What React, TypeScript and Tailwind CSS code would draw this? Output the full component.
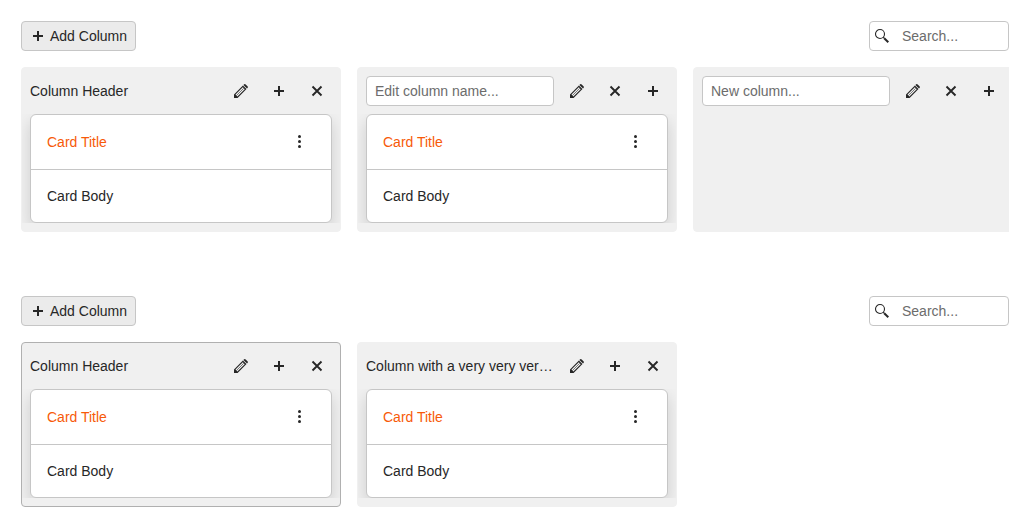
import React from "react";

type IconProps = { className?: string };

const PlusIcon = () => (
  <svg className="size-4 shrink-0" viewBox="0 0 16 16" fill="currentColor">
    <path d="M7 3h2v4h4v2H9v4H7V9H3V7h4z" />
  </svg>
);

const CloseIcon = () => (
  <svg className="size-4 shrink-0" viewBox="0 0 16 16" fill="none" stroke="currentColor" strokeWidth="1.9">
    <path d="M3.5 3.5l9 9M12.5 3.5l-9 9" />
  </svg>
);

const PencilIcon = () => (
  <svg className="size-4 shrink-0" viewBox="0 0 16 16" fill="currentColor">
    <path
      fillRule="evenodd"
      d="M1 15v-3.6l8.9-8.9 3.6 3.6L4.6 15zM2.5 11.6l1.9 1.9 7.3-7.3-1.9-1.9z"
    />
    <path d="M3.4 12.6l7.3-7.3" stroke="currentColor" strokeWidth="0.6" />
    <path d="M1 15v-2.4L3.4 15z" />
    <path d="M10.4 2l.8-.7q.6-.5 1.2 0l2.3 2.3q.5.6 0 1.2l-.7.8z" />
  </svg>
);

const SearchIcon = ({ className = "" }: IconProps) => (
  <svg className={`size-4 shrink-0 ${className}`} viewBox="0 0 16 16" fill="none" stroke="currentColor">
    <circle cx="6" cy="6" r="4.5" strokeWidth="1.1" />
    <path d="M9.2 9.2l1.2 1.2" strokeWidth="1.2" />
    <path d="M10.2 10.2l4.1 4.1" strokeWidth="2" />
  </svg>
);

const MoreIcon = () => (
  <svg className="size-4 shrink-0" viewBox="0 0 16 16" fill="currentColor">
    <circle cx="7.5" cy="2.5" r="1.5" />
    <circle cx="7.5" cy="7.5" r="1.5" />
    <circle cx="7.5" cy="12.5" r="1.5" />
  </svg>
);

const icons = { edit: PencilIcon, add: PlusIcon, close: CloseIcon, more: MoreIcon };
type Action = keyof typeof icons;

function IconButton({ action }: { action: Action }) {
  const Icon = icons[action];
  return (
    <button aria-label={action} className="flex size-[30px] shrink-0 items-center justify-center">
      <Icon />
    </button>
  );
}

function Card() {
  return (
    <div className="rounded-md border border-[#c6c6c6] bg-white shadow-[0_7px_16px_rgba(0,0,0,0.14)]">
      <div className="flex h-[55px] items-center justify-between border-b border-[#c6c6c6] px-4">
        <span className="text-[#f75a08]">Card Title</span>
        <IconButton action="more" />
      </div>
      <div className="flex h-[52px] items-center px-4">Card Body</div>
    </div>
  );
}

type ColumnProps = {
  title?: string;
  placeholder?: string;
  actions: Action[];
  selected?: boolean;
  empty?: boolean;
};

function Column({ title, placeholder, actions, selected, empty }: ColumnProps) {
  return (
    <section
      className={`flex h-[165px] w-80 shrink-0 flex-col rounded border bg-[#f0f0f0] ${
        selected ? "border-[#b0b0b0]" : "border-[#f0f0f0]"
      }`}
    >
      <header className="flex gap-2 p-2">
        {placeholder ? (
          <input
            className="h-[30px] w-0 min-w-0 flex-1 rounded border border-[#c6c6c6] bg-white px-2 outline-none placeholder:text-[#6c6c6c]"
            placeholder={placeholder}
          />
        ) : (
          <div className="min-w-0 flex-1 truncate leading-[30px]">{title}</div>
        )}
        {actions.map((action) => (
          <IconButton key={action} action={action} />
        ))}
      </header>
      <div className="mb-2 flex-1 overflow-hidden px-2">{!empty && <Card />}</div>
    </section>
  );
}

function TaskBoard({ columns }: { columns: ColumnProps[] }) {
  return (
    <div className="flex w-[988px] flex-col gap-4">
      <div className="flex items-center justify-between">
        <button className="flex h-[30px] items-center gap-1 rounded border border-[#c6c6c6] bg-[#ebebeb] px-2">
          <PlusIcon />
          <span>Add Column</span>
        </button>
        <label className="flex h-[30px] w-[140px] items-center rounded border border-[#c6c6c6] bg-white">
          <SearchIcon className="ml-1" />
          <input
            className="ml-1 w-0 min-w-0 flex-1 px-2 outline-none placeholder:text-[#6c6c6c]"
            placeholder="Search..."
          />
        </label>
      </div>
      <div className="flex gap-4 overflow-hidden">
        {columns.map((column, index) => (
          <Column key={index} {...column} />
        ))}
      </div>
    </div>
  );
}

export default function App() {
  return (
    <main className="flex h-[528px] flex-col gap-16 overflow-hidden bg-white pt-[21px] pl-[21px] font-['Liberation_Sans',Arial,sans-serif] text-sm text-[#272727] antialiased">
      <TaskBoard
        columns={[
          { title: "Column Header", actions: ["edit", "add", "close"] },
          { placeholder: "Edit column name...", actions: ["edit", "close", "add"] },
          { placeholder: "New column...", actions: ["edit", "close", "add"], empty: true },
        ]}
      />
      <TaskBoard
        columns={[
          { title: "Column Header", actions: ["edit", "add", "close"], selected: true },
          { title: "Column with a very very very long header", actions: ["edit", "add", "close"] },
        ]}
      />
    </main>
  );
}
